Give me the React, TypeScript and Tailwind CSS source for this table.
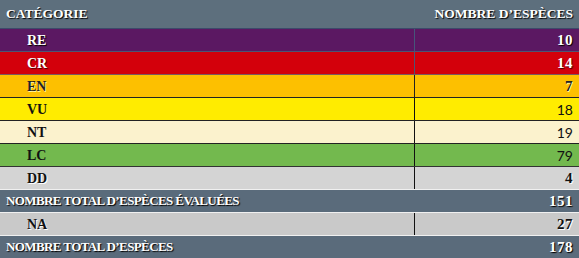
import React from "react";

type Row = {
  label: string;
  value: number;
  bg: string;
  text: string;
  numFont?: string;
  border: string;
  divider: string;
  total?: boolean;
};

const rows: Row[] = [
  { label: "RE", value: 10, bg: "bg-[#5b1862]", text: "text-white [text-shadow:1px_1px_1px_#000]", border: "border-[#3d4a6a]", divider: "border-[#46557a]" },
  { label: "CR", value: 14, bg: "bg-[#d3000b]", text: "text-white [text-shadow:1px_1px_1px_#400]", border: "border-[#4d5573]", divider: "border-[#4d5573]" },
  { label: "EN", value: 7, bg: "bg-[#fdc000]", text: "text-[#222] [text-shadow:1px_1px_0_#fff3a0]", border: "border-[#7a5a60]", divider: "border-[#222]" },
  { label: "VU", value: 18, bg: "bg-[#ffec00]", text: "text-[#111]", numFont: "sans", border: "border-[#222]", divider: "border-[#111]" },
  { label: "NT", value: 19, bg: "bg-[#fbf2cd]", text: "text-[#111]", numFont: "sans", border: "border-[#222]", divider: "border-[#111]" },
  { label: "LC", value: 79, bg: "bg-[#73b94e]", text: "text-[#111]", numFont: "sans", border: "border-[#222]", divider: "border-[#111]" },
  { label: "DD", value: 4, bg: "bg-[#d4d4d4]", text: "text-[#111] [text-shadow:1px_1px_0_#fff]", border: "border-[#333]", divider: "border-[#111]" },
  { label: "NOMBRE TOTAL D’ESPÈCES ÉVALUÉES", value: 151, bg: "bg-[#5a6b7b]", text: "text-white [text-shadow:1px_1px_1px_#000]", border: "border-[#f0f0f0]", divider: "border-[#5a6b7b]", total: true },
  { label: "NA", value: 27, bg: "bg-[#c9c9c9]", text: "text-[#111] [text-shadow:1px_1px_0_#fff]", border: "border-[#f0f0f0]", divider: "border-[#111]" },
  { label: "NOMBRE TOTAL D’ESPÈCES", value: 178, bg: "bg-[#5a6b7b]", text: "text-white [text-shadow:1px_1px_1px_#000]", border: "border-[#f0f0f0]", divider: "border-[#5a6b7b]", total: true },
];

export default function App() {
  return (
    <div className="w-[579px] h-[258px] overflow-hidden bg-white font-['Liberation_Serif',serif] font-bold">
      <div className="flex h-[28px] items-center justify-between bg-[#5d6f7d] px-[6px] text-[13.5px] text-white [text-shadow:1px_1px_1px_#000]">
        <span>CATÉGORIE</span>
        <span>NOMBRE D’ESPÈCES</span>
      </div>
      {rows.map((row) => (
        <div key={row.label} className={`flex h-[23px] border-t ${row.border} ${row.bg} ${row.text}`}>
          <div
            className={`flex w-[415px] items-center border-r ${row.divider} ${
              row.total ? "pl-[6px] text-[13px] tracking-[-0.6px]" : "pl-[27px] text-[14px]"
            }`}
          >
            {row.label}
          </div>
          <div
            className={`flex flex-1 items-center justify-end pr-[6px] ${
              row.numFont === "sans" ? "font-['Lato',sans-serif] text-[14px] font-normal" : "text-[15px] tracking-[0.5px]"
            }`}
          >
            {row.value}
          </div>
        </div>
      ))}
    </div>
  );
}
